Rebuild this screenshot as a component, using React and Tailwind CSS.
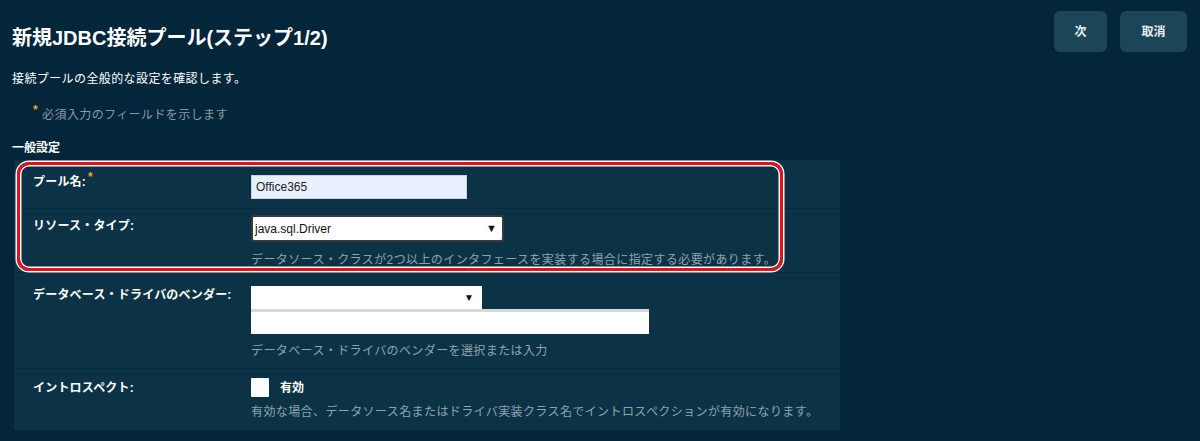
const font = { fontFamily: '"Liberation Sans", "Noto Sans CJK JP", sans-serif' };

const Row = ({ label, required, className, children, labelPt, valuePt }) => (
  <div className={`flex border-t border-[#072b3c] first:border-t-0 ${className}`}>
    <div className={`w-[237px] shrink-0 pl-[19px] text-[12px] leading-4 font-bold tracking-[0.2px] text-white ${labelPt}`}>
      {label}
      {required && <span className="relative -top-[5px] ml-[2px] text-[#e8a33a] text-[12px]">*</span>}
    </div>
    <div className={`flex flex-col ${valuePt}`}>{children}</div>
  </div>
);

const Help = ({ className, children }) => (
  <div className={`text-[12px] leading-4 tracking-[0.4px] text-[#8ea3ae] ${className}`}>{children}</div>
);

export default function App() {
  return (
    <div className="w-[1200px] h-[441px] bg-[#03263a] text-white overflow-hidden" style={font}>
      <div className="flex justify-between">
        <h1 className="pl-3 pt-[26px] text-[20px] leading-6 font-bold">新規JDBC接続プール(ステップ1/2)</h1>
        <div className="flex gap-[13px] pt-[11px] pr-[13px]">
          <button className="w-[53px] h-[41px] rounded-[6px] bg-[#1c4557] text-[12px] font-bold text-[#e6eef2]">次</button>
          <button className="w-[67px] h-[41px] rounded-[6px] bg-[#1c4557] text-[12px] font-bold text-[#e6eef2]">取消</button>
        </div>
      </div>

      <p className="pl-3 mt-[19px] text-[12px] leading-4 tracking-[0.4px]">接続プールの全般的な設定を確認します。</p>
      <p className="pl-[33px] mt-[20px] text-[12px] leading-4 tracking-[0.4px] text-[#8b99a2]">
        <span className="relative -top-[5px] mr-[4px] text-[#e8a33a] text-[12px] font-bold">*</span>
        必須入力のフィールドを示します
      </p>
      <h2 className="pl-3 mt-[17px] text-[12px] leading-4 font-bold">一般設定</h2>

      <div className="relative ml-[14px] mt-[4px] w-[826px] bg-[#0c3345]">
        <Row label="プール名:" required className="h-[48px]" labelPt="pt-[14px]" valuePt="pt-[15px]">
          <div className="w-[216px] h-[24px] bg-[#e8f0fe] border border-[#c9d3de] pl-[4px] text-[12px] leading-[22px] text-[#222]">
            Office365
          </div>
        </Row>
        <Row label="リソース・タイプ:" className="h-[64px]" labelPt="pt-[9px]" valuePt="pt-[6px]">
          <div className="w-[253px] h-[27px] bg-white border-2 border-[#3a3a3a] rounded-[3px] flex items-center justify-between pl-[2px] pr-[5px] text-[12px] text-[#111]">
            <span>java.sql.Driver</span>
            <span className="text-[11px]">▼</span>
          </div>
          <Help className="mt-[10px]">データソース・クラスが2つ以上のインタフェースを実装する場合に指定する必要があります。</Help>
        </Row>
        <Row label="データベース・ドライバのベンダー:" className="h-[96px]" labelPt="pt-[14px]" valuePt="pt-[13px]">
          <div className="w-[231px] h-[23px] bg-white flex items-center justify-end pr-[8px] text-[#111]">
            <span className="text-[10px]">▼</span>
          </div>
          <div className="w-[398px] h-[25px] bg-white border-t-[3px] border-[#d6d9db]" />
          <Help className="mt-[9px]">データベース・ドライバのベンダーを選択または入力</Help>
        </Row>
        <Row label="イントロスペクト:" className="h-[62px]" labelPt="pt-[11px]" valuePt="pt-[9px]">
          <div className="flex items-center gap-[11px]">
            <div className="w-[18px] h-[19px] bg-white rounded-[1px]" />
            <span className="text-[12px] font-bold text-white">有効</span>
          </div>
          <Help className="mt-[7px]">有効な場合、データソース名またはドライバ実装クラス名でイントロスペクションが有効になります。</Help>
        </Row>

        <div className="absolute left-[3px] top-[2px] w-[766px] h-[109px] rounded-[12px] border-[3px] border-[#e3131b] shadow-[0_0_0_1.5px_#ffffff,inset_0_0_0_1.5px_#ffffff]" />
      </div>
    </div>
  );
}
